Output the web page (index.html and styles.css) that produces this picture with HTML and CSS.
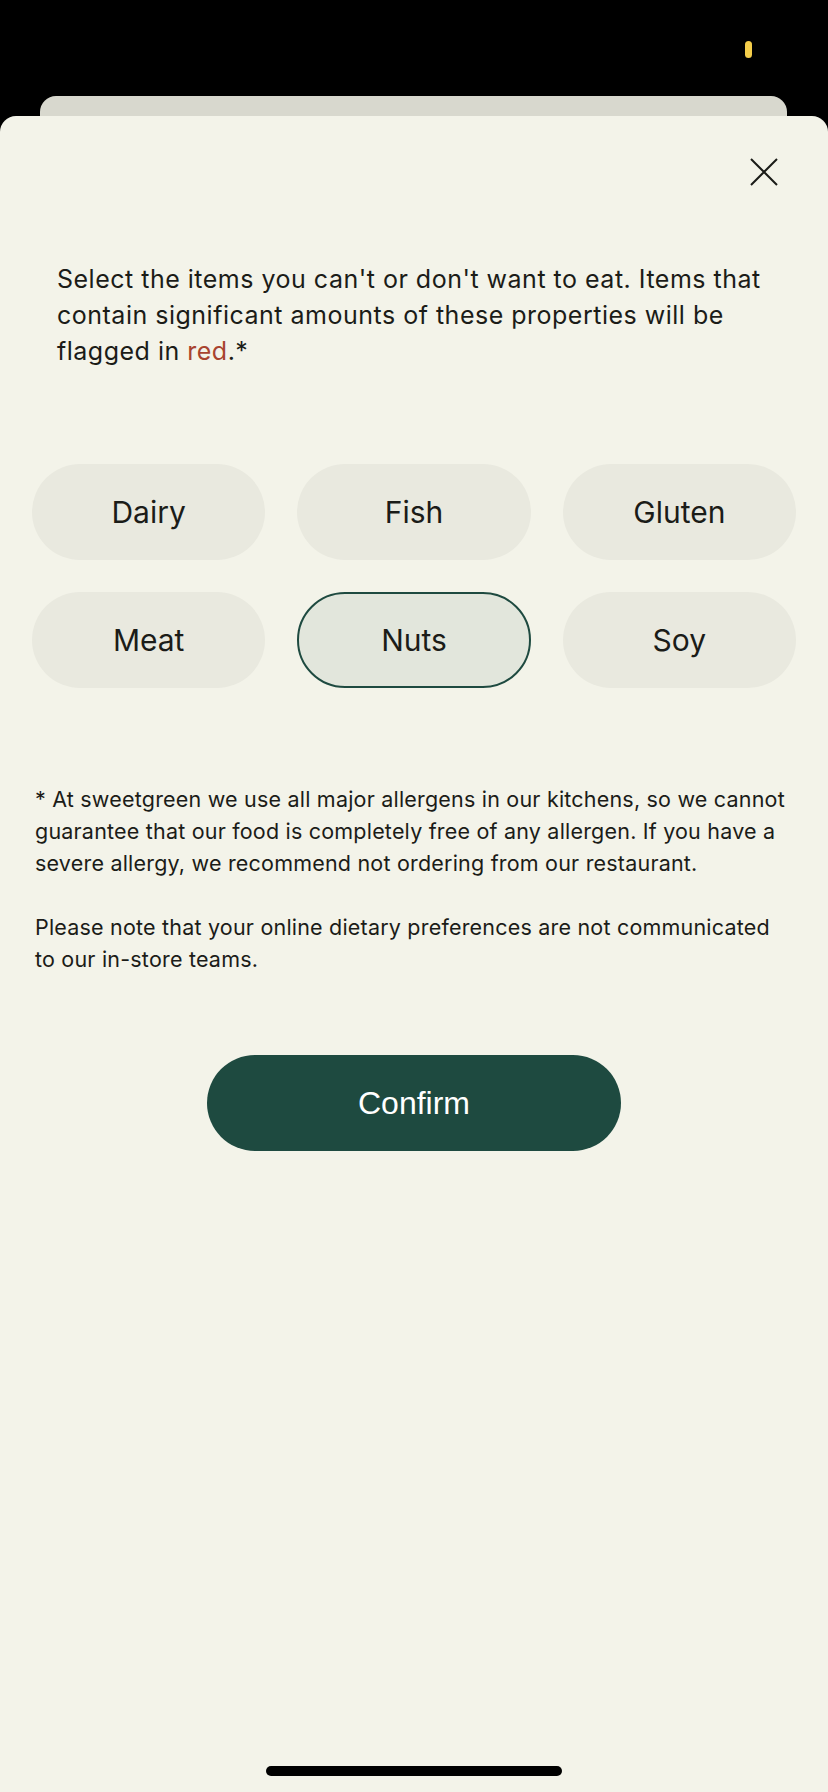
FILE: index.html
```html
<!DOCTYPE html>
<html lang="en">
<head>
<meta charset="utf-8">
<title>Dietary preferences</title>
<link rel="stylesheet" href="styles.css">
</head>
<body>
<div class="screen">
  <div class="status-bar">
    <span class="status-dot"></span>
  </div>
  <div class="back-card"></div>
  <div class="sheet">
    <div class="sheet-header">
      <button class="close-btn" aria-label="Close">
        <svg width="28" height="28" viewBox="0 0 28 28" fill="none">
          <path d="M1 1 L27 27 M27 1 L1 27" stroke="#1b1c18" stroke-width="2"/>
        </svg>
      </button>
    </div>
    <p class="intro">Select the items you can't or don't want to eat. Items that contain significant amounts of these properties will be flagged in <span class="red">red</span>.*</p>
    <div class="chips">
      <button class="chip">Dairy</button>
      <button class="chip">Fish</button>
      <button class="chip">Gluten</button>
      <button class="chip">Meat</button>
      <button class="chip chip-selected">Nuts</button>
      <button class="chip">Soy</button>
    </div>
    <div class="notes">
      <p>* At sweetgreen we use all major allergens in our kitchens, so we cannot guarantee that our food is completely free of any allergen. If you have a severe allergy, we recommend not ordering from our restaurant.</p>
      <p>Please note that your online dietary preferences are not communicated to our in-store teams.</p>
    </div>
    <div class="actions">
      <button class="confirm">Confirm</button>
    </div>
    <div class="spacer"></div>
    <div class="home-bar"><span class="home-indicator"></span></div>
  </div>
</div>
</body>
</html>
```

FILE: styles.css
```css
* { box-sizing: border-box; }
html, body { margin: 0; padding: 0; }
body {
  background: #000;
  font-family: Inter, "Noto Sans", sans-serif;
  color: #1b1c18;
}
.screen {
  width: 828px;
  height: 1792px;
  display: flex;
  flex-direction: column;
  overflow: hidden;
}
.status-bar {
  height: 96px;
  flex: none;
  display: flex;
  justify-content: flex-end;
  align-items: flex-start;
  padding: 41px 76px 0 0;
}
.status-dot {
  width: 7px;
  height: 17px;
  border-radius: 4px;
  background: #f4cd4a;
}
.back-card {
  flex: none;
  height: 36px;
  margin: 0 41px 0 40px;
  background: #d8d8ce;
  border-radius: 16px 16px 0 0;
}
.sheet {
  flex: 1;
  margin-top: -16px;
  background: #f3f3e9;
  border-radius: 16px 16px 0 0;
  display: flex;
  flex-direction: column;
}
.sheet-header {
  display: flex;
  justify-content: flex-end;
  padding: 42px 50px 0 0;
}
.close-btn {
  border: 0;
  background: none;
  padding: 0;
  width: 28px;
  height: 28px;
  display: flex;
}
.intro {
  margin: 75px 40px 0 57px;
  font-size: 25px;
  line-height: 36px;
  letter-spacing: 0.5px;
}
.red { color: #a8432f; }
.chips {
  margin: 95px 32px 0 32px;
  display: grid;
  grid-template-columns: repeat(3, 1fr);
  gap: 32px 32px;
}
.chip {
  height: 96px;
  border: 2px solid transparent;
  border-radius: 48px;
  background: #e9e9df;
  font-family: Inter, "Noto Sans", sans-serif;
  font-size: 30px;
  color: #1b1c18;
  padding: 0;
}
.chip-selected {
  background: #e2e6dc;
  border-color: #1e4a40;
}
.notes {
  margin: 95px 40px 0 35px;
  font-size: 21.5px;
  line-height: 32px;
  letter-spacing: 0.2px;
}
.notes p { margin: 0 0 32px 0; }
.notes p:last-child { margin-bottom: 0; }
.actions {
  margin-top: 80px;
  display: flex;
  justify-content: center;
}
.confirm {
  width: 414px;
  height: 96px;
  border: 0;
  border-radius: 48px;
  background: #1e4a40;
  color: #fff;
  font-family: "Liberation Sans", Arial, sans-serif;
  font-size: 32px;
  padding: 0;
}
.spacer { flex: 1; }
.home-bar {
  height: 26px;
  display: flex;
  justify-content: center;
  align-items: flex-start;
}
.home-indicator {
  width: 296px;
  height: 10px;
  border-radius: 5px;
  background: #000;
}
```
